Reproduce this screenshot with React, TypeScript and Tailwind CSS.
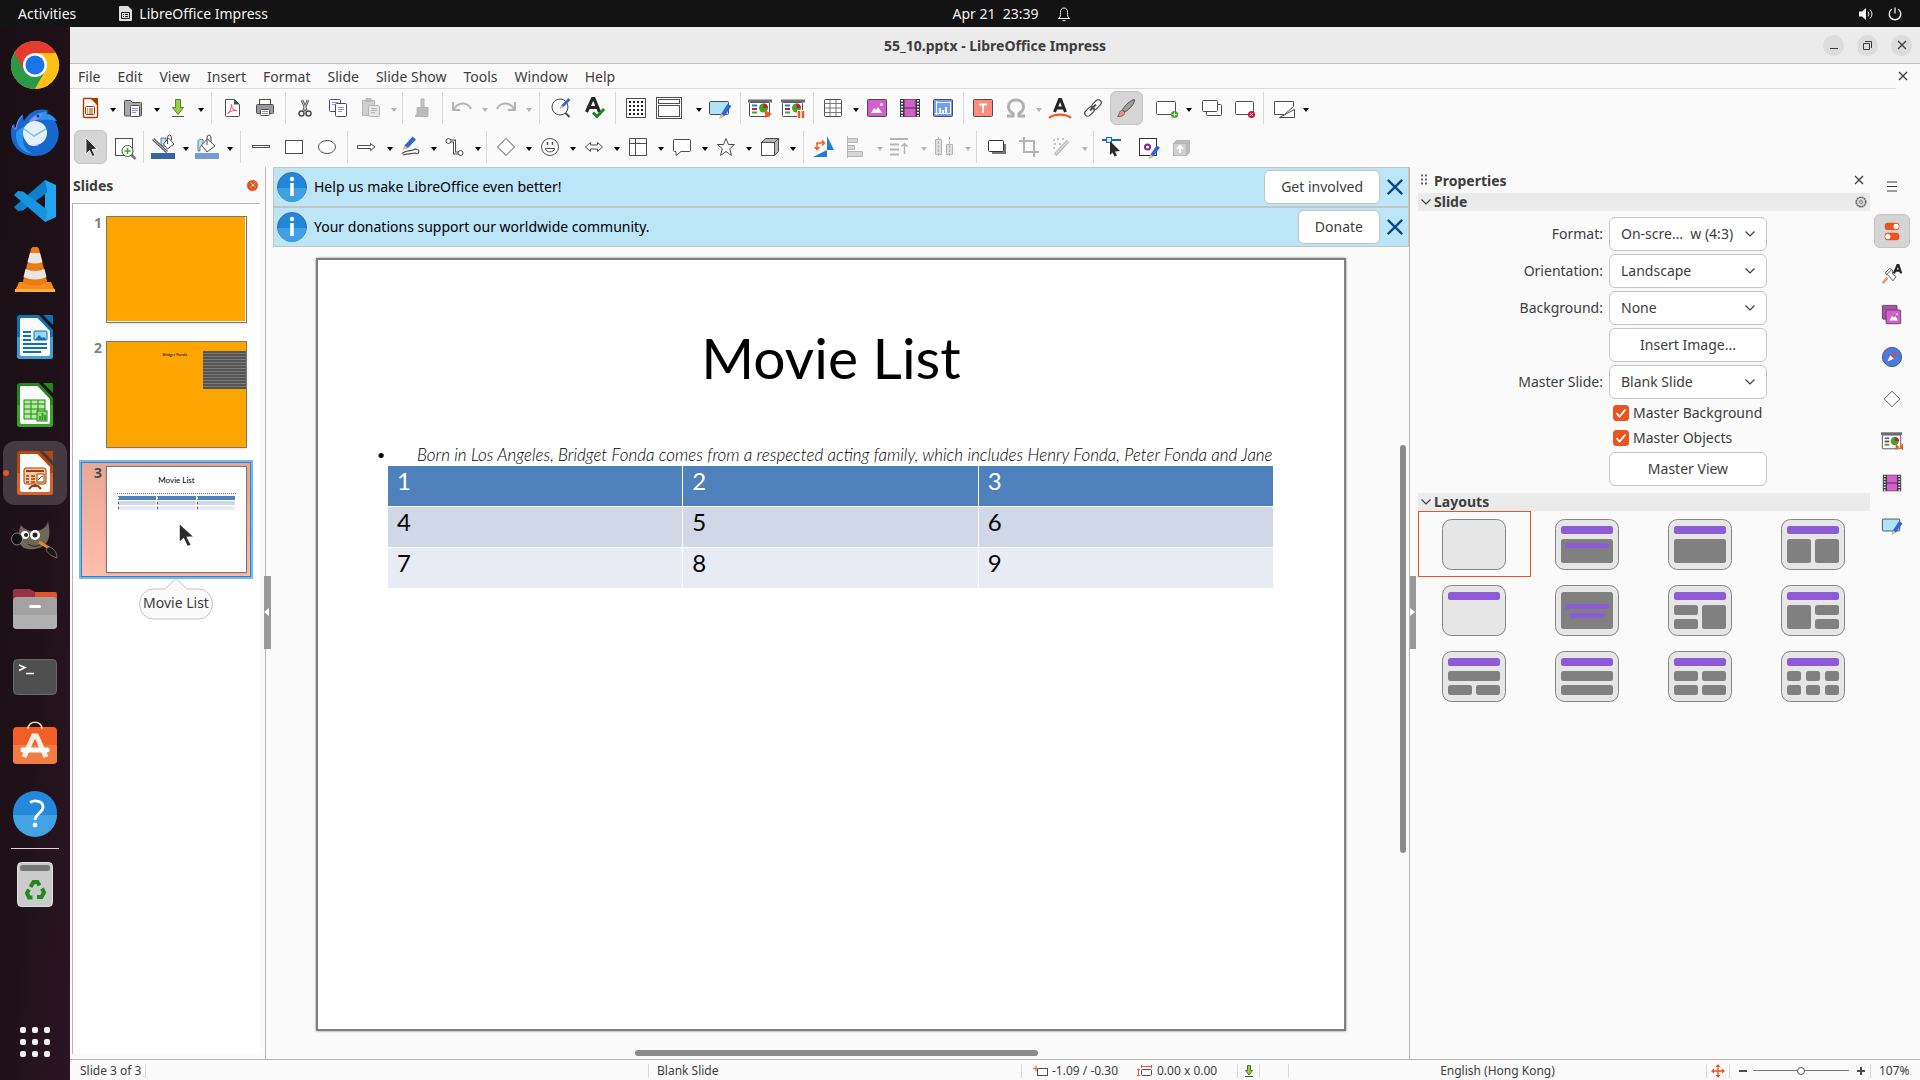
import { useState } from "react";
import type { ReactNode } from "react";

const K = "#4d4d4d";
const G = "#b5b5b5";

/* 24x24 toolbar glyphs */
const icons: Record<string, ReactNode> = {
  new: (
    <>
      <path d="M5.5 2.5h9l5 5v13a1 1 0 0 1-1 1h-12a1 1 0 0 1-1-1v-17a1 1 0 0 1 1-1z" fill="#fff" stroke="#a33e03" strokeWidth="1.4" />
      <path d="M12 2h8v8z" fill="#a33e03" />
      <rect x="7.5" y="10.5" width="9" height="8" rx="1" fill="none" stroke="#a33e03" />
      <path d="M9 13h1.2M11 13h4M9 15h1.2M11 15h4M9 17h1.2M11 17h4" stroke="#a33e03" />
    </>
  ),
  open: (
    <>
      <path d="M2.5 19V5.5a1 1 0 0 1 1-1h5l2 2h8a1 1 0 0 1 1 1V19a1 1 0 0 1-1 1h-15a1 1 0 0 1-1-1z" fill="#a9a9a9" stroke={K} />
      <rect x="8.5" y="9.5" width="9" height="11" rx="1" fill="#fff" stroke={K} />
      <path d="M10 12.5h6M10 14.5h6M10 16.5h4" stroke="#8d8df0" />
    </>
  ),
  save: (
    <>
      <path d="M9.5 3.5h5v8h3l-5.5 7-5.5-7h3z" fill="#94d13a" stroke="#5d7a35" />
      <path d="M6 20.5h12" stroke={K} />
    </>
  ),
  pdf: (
    <>
      <path d="M5.5 3.5h9l5 5v11a1 1 0 0 1-1 1h-12a1 1 0 0 1-1-1v-15a1 1 0 0 1 1-1z" fill="#fff" stroke={K} />
      <path d="M14 3.5v5h5.5z" fill={K} />
      <path d="M7.5 17.5c2.500-2 4-5 4-9 0 4 2 6 5.500 6-3.500-.5-6 .5-9.500 3z" fill="none" stroke="#ee4b72" />
    </>
  ),
  print: (
    <>
      <rect x="6.5" y="3.5" width="11" height="5" fill="#fff" stroke={K} />
      <rect x="3.5" y="8.5" width="17" height="9" rx="1" fill="#999" stroke={K} />
      <rect x="7.5" y="13.5" width="9" height="6" rx="1" fill="#fff" stroke={K} />
      <path d="M9 15.5h6M9 17.5h6" stroke="#8d8df0" />
    </>
  ),
  cut: (
    <>
      <path d="M9 4l4.5 11M15 4l-4.5 11" stroke={K} strokeWidth="2.6" />
      <path d="M9 4l4.5 11M15 4l-4.5 11" stroke="#d8d4c8" />
      <circle cx="8.5" cy="17.5" r="2.5" fill="none" stroke={K} strokeWidth="1.5" />
      <circle cx="15.5" cy="17.5" r="2.5" fill="none" stroke={K} strokeWidth="1.5" />
    </>
  ),
  copy: (
    <>
      <rect x="3.5" y="3.5" width="11" height="12" rx="1" fill="#fff" stroke={K} />
      <path d="M6 6.5h6M6 8.5h3" stroke="#8d8df0" />
      <rect x="9.5" y="7.5" width="11" height="13" rx="1" fill="#fff" stroke={K} />
      <path d="M12 11.5h6M12 13.5h6M12 15.5h4" stroke="#8d8df0" />
    </>
  ),
  paste: (
    <>
      <path d="M3.5 4.5h12v15h-12zM7 2.5h5v3H7z" fill="#cfcfcf" stroke={G} />
      <rect x="9.5" y="9.5" width="11" height="11" rx="1" fill="#e6e6e6" stroke={G} />
      <path d="M12 12.5h6M12 14.5h6M12 16.5h4" stroke={G} />
    </>
  ),
  clone: (
    <>
      <path d="M11 3h3v8h-3z" fill="#c6c6c6" stroke={G} />
      <path d="M7 11.5h11v3H7zM7 14.5h11v6H5l2-3z" fill="#bdbdbd" stroke={G} />
    </>
  ),
  undo: <path d="M3 6v8h7M3.5 13.5C8 6 17 5 21 13" fill="none" stroke={G} strokeWidth="2" />,
  redo: <path d="M21 6v8h-7M20.5 13.5C16 6 7 5 3 13" fill="none" stroke={G} strokeWidth="2" />,
  find: (
    <>
      <circle cx="12" cy="11" r="8" fill="none" stroke={K} />
      <path d="M17.5 17l4 4" stroke={K} strokeWidth="2" />
      <path d="M12 12.5l1.5-3.5 7-7 2 2-7 7z" fill="#3465d8" />
      <path d="M12 12.5l1.5-3.5 2 2z" fill="#fbbd77" />
    </>
  ),
  spell: (
    <>
      <path d="M5.5 16L11.5 2.5h1.5L18.5 16M7.5 11.5h9" fill="none" stroke="#262626" strokeWidth="3.2" />
      <path d="M12 16.5l4 4 7-7.5" fill="none" stroke="#158a22" strokeWidth="3" />
    </>
  ),
  grid: (
    <>
      <rect x="2.5" y="2.5" width="19" height="19" fill="#fff" stroke={K} />
      <path d="M5 6h14M5 10h14M5 14h14M5 18h14" stroke="#222" strokeWidth="2" strokeDasharray="2 2" />
    </>
  ),
  display: (
    <>
      <rect x="-.5" y="1.5" width="25" height="21" fill="#fff" stroke={K} />
      <rect x="1.5" y="3.5" width="21" height="4" fill="none" stroke={K} />
      <rect x="1.5" y="9.5" width="21" height="11" fill="none" stroke={K} />
    </>
  ),
  master: (
    <>
      <rect x="1.5" y="5.5" width="19" height="13" rx="1" fill="#aee3f8" stroke={K} />
      <path d="M11.5 22.5l1.5-4.5 6.5-10 4 2-7 10z" fill="#3465d8" />
      <path d="M11.5 22.5l1.5-4.5 3.2 2z" fill="#fbbd77" />
    </>
  ),
  start: (
    <>
      <rect x="1.5" y="6.5" width="20" height="14" rx="1" fill="#fff" stroke={K} />
      <path d="M0 5h24" stroke="#6b6b6b" strokeWidth="3" />
      <path d="M4 9.5h5" stroke="#1b7fd6" strokeWidth="2" />
      <path d="M4 13h5" stroke="#d0143c" strokeWidth="2" />
      <path d="M4 16.5h5" stroke="#3fa628" strokeWidth="2" />
      <circle cx="15.5" cy="12" r="4.5" fill="#3fa628" />
      <path d="M15.5 12V7.5A4.5 4.5 0 0 1 20 12z" fill="#d0143c" />
      <path d="M17 14l7 4-7 4z" fill="#f15a24" />
    </>
  ),
  startHere: (
    <>
      <rect x="1.5" y="6.5" width="20" height="14" rx="1" fill="#fff" stroke={K} />
      <path d="M0 5h24" stroke="#6b6b6b" strokeWidth="3" />
      <path d="M4 9.5h5" stroke="#1b7fd6" strokeWidth="2" />
      <path d="M4 13h5" stroke="#d0143c" strokeWidth="2" />
      <path d="M4 16.5h5" stroke="#3fa628" strokeWidth="2" />
      <circle cx="15.5" cy="12" r="4.5" fill="#3fa628" />
      <path d="M15.5 12V7.5A4.5 4.5 0 0 1 20 12z" fill="#d0143c" />
      <path d="M16 14h8v9h-8z" fill="#fafafa" />
      <path d="M18 15v7M22 15v7" stroke="#f15a24" strokeWidth="2.5" />
    </>
  ),
  table: (
    <>
      <rect x="3.5" y="3.5" width="17" height="17" rx="1" fill="#fff" stroke={K} />
      <path d="M3.5 7.5h17M3.5 12h17M3.5 16.5h17M9 3.5v17M15 3.5v17" stroke="#777" />
    </>
  ),
  image: (
    <>
      <rect x="2.5" y="3.5" width="19" height="17" rx="1" fill="#d25fcb" stroke={K} />
      <path d="M6 17l3-5 2 2 2-3 4 6z" fill="#fff" />
      <circle cx="16.5" cy="8.5" r="1.5" fill="#f5dff4" />
    </>
  ),
  video: (
    <>
      <rect x="2" y="3" width="20" height="18" fill="#3f3a3f" />
      <path d="M6.5 3.5h11v8h-11zM6.5 12.5h11v8h-11z" fill="#d25fcb" />
      <path d="M4 4v17M20 4v17" stroke="#fff" strokeWidth="2" strokeDasharray="1.5 1.5" />
    </>
  ),
  chart: (
    <>
      <rect x="2.5" y="3.5" width="19" height="17" rx="1" fill="#729fff" stroke={K} />
      <path d="M5.5 5v14M4 17.5h16M5 6.5h14.5v11" fill="none" stroke="#fff" />
      <path d="M9 17v-5M12 17v-3M15 17v-6" stroke="#fff" strokeWidth="2" />
    </>
  ),
  textbox: (
    <>
      <rect x="2.5" y="3.5" width="19" height="17" rx="1" fill="#ff8d7e" stroke={K} />
      <path d="M8 8.5h8M12 8.5V17" stroke="#fff" strokeWidth="2" />
    </>
  ),
  omega: <path d="M3 20h6v-2.5C5.5 15.5 4.5 13 4.5 10.5 4.5 6 8 4 12 4s7.5 2 7.5 6.5c0 2.5-1 5-4.5 7V20h6" fill="none" stroke="#b0b0b0" strokeWidth="3" />,
  fontwork: (
    <>
      <path d="M6.5 16L11.5 3.5h1.2L17.5 16M8.5 12h7.5" fill="none" stroke="#262626" strokeWidth="3" />
      <path d="M1 22c5-4.5 17-4.5 22 0" fill="none" stroke="#f15a24" strokeWidth="2.2" />
    </>
  ),
  link: (
    <g fill="none" stroke={K} strokeWidth="1.2">
      <rect x="10" y="5.5" width="11" height="6" rx="3" transform="rotate(-45 15.5 8.5)" />
      <rect x="3" y="12.5" width="11" height="6" rx="3" transform="rotate(-45 8.5 15.5)" />
      <path d="M9 14.5l6-6" strokeWidth="2" />
    </g>
  ),
  brush: (
    <>
      <path d="M8.5 13.5C12 8.5 16 4.5 20.5 3.5c0 4.5-4.5 9-9.5 12.5z" fill="#a0a0a0" stroke={K} />
      <path d="M3.5 20.5c2-1.5 1.5-4 3-5.5 2-1.5 4.5 0 4 2.5-.6 2.5-4.5 3.5-7 3z" fill="#ff8d7e" stroke={K} strokeWidth=".8" />
    </>
  ),
  newSlide: (
    <>
      <rect x="2.5" y="5.5" width="19" height="13" rx="1" fill="#fff" stroke={K} />
      <circle cx="20.5" cy="18.5" r="3.5" fill="#3fa628" />
      <path d="M18.5 18.5h4M20.5 16.5v4" stroke="#fff" />
    </>
  ),
  dupSlide: (
    <>
      <rect x="8.5" y="8.5" width="15" height="11" rx="1" fill="#fff" stroke={K} />
      <rect x="4.5" y="4.5" width="15" height="11" rx="1" fill="#fff" stroke={K} />
    </>
  ),
  delSlide: (
    <>
      <rect x="4.5" y="5.5" width="18" height="13" rx="1" fill="#fff" stroke={K} />
      <circle cx="20.5" cy="18.5" r="3.5" fill="#d0143c" />
      <path d="M19 17l3 3M22 17l-3 3" stroke="#fff" />
    </>
  ),
  layout: (
    <>
      <path d="M3.5 5.5h19v5l-9 8h-10z" fill="#fff" stroke={K} />
      <path d="M8.5 21.5l15-8v8z" fill="#fff" stroke={K} />
    </>
  ),
  select: <path d="M8 3l11 11-5 .5 3 6-2.5 1-3-6-3.5 3.5z" fill="#2b2b2b" stroke="#fff" strokeWidth=".8" />,
  zoom: (
    <>
      <rect x="4.5" y="3.5" width="17" height="17" fill="#fff" stroke={K} />
      <circle cx="16.5" cy="16" r="5.5" fill="#fff" stroke={K} />
      <path d="M20.5 20l4 4" stroke="#777" strokeWidth="2.5" />
      <path d="M13.5 16h6M16.5 13v6" stroke="#3fa628" strokeWidth="1.5" />
    </>
  ),
  lineColor: (
    <>
      <path d="M10 3h5v8h-5z" fill="#aee3f8" stroke={K} strokeWidth=".7" />
      <path d="M2 4l14 13" stroke={K} strokeWidth="3" />
      <path d="M2 4l14 13" stroke="#ddd" />
      <path d="M17.5 3l5.5 6-6.5 5-4-5z" fill="#fff" stroke={K} />
      <path d="M16.5 9V3q0-3 2-3t2 3v2" fill="none" stroke={K} />
      <path d="M0 18h24v6H0z" fill="#3465a4" />
    </>
  ),
  fillColor: (
    <>
      <path d="M3 16V6q0-2 5-1.5V10l-3 2v4z" fill="#aee3f8" stroke={K} strokeWidth=".7" />
      <path d="M12.5 4l7.5 7-8 6-5.5-7z" fill="#fff" stroke={K} />
      <path d="M12 10V3q0-3 2-3t2 3v4" fill="none" stroke={K} />
      <path d="M0 18h24v6H0z" fill="#729fcf" />
    </>
  ),
  line: <rect x="3.5" y="10.5" width="17" height="2" fill="#fff" stroke={K} />,
  rect: <rect x="3.5" y="5.5" width="17" height="13" fill="#fff" stroke={K} />,
  ellipse: <ellipse cx="12" cy="12" rx="8.5" ry="6.5" fill="#fff" stroke={K} />,
  arrow: <path d="M2.5 10.5h13v-2l4.5 3.5-4.5 3.5v-2h-13z" fill="#fff" stroke={K} />,
  curve: (
    <>
      <path d="M3 18.5c5-4 9-2 11-3.5s6-1 6 1.5-4 3-4 1M4 20c5-2 9-1 12-2" fill="none" stroke={K} strokeWidth="1.2" />
      <path d="M4 14.5l1.5-4 8-9 3.5 3-8 8.5z" fill="#3465d8" />
      <path d="M4 14.5l1.5-4 3.5 2.5z" fill="#fbbd77" />
    </>
  ),
  connector: (
    <>
      <path d="M6 6h5.5v12H17" fill="none" stroke={K} strokeWidth="3" />
      <path d="M6 6h5.5v12H17" fill="none" stroke="#fff" />
      <circle cx="5.5" cy="6" r="2.5" fill="#fff" stroke={K} />
      <circle cx="17.5" cy="18" r="2.5" fill="#fff" stroke={K} />
    </>
  ),
  diamond: <path d="M12 3.5l8.5 8.5-8.5 8.5L3.5 12z" fill="#fff" stroke={K} />,
  smiley: (
    <>
      <circle cx="12" cy="12" r="8.5" fill="#fff" stroke={K} />
      <path d="M9.5 7v3M14.5 7v3" stroke={K} strokeWidth="1.5" />
      <path d="M7.5 13.5h9c0 4.5-9 4.5-9 0z" fill="#fff" stroke={K} />
    </>
  ),
  dblArrow: <path d="M3.5 12l5-4.5v2.5h7V7.5l5 4.5-5 4.5V14h-7v2.5z" fill="#fff" stroke={K} />,
  flow: <path d="M3.5 3.5h17v17h-17zM3.5 8.5h17M9.5 3.5v17" fill="#fff" stroke={K} />,
  callout: <path d="M4.5 4.5h15a1 1 0 0 1 1 1v10a1 1 0 0 1-1 1H11l-5 4v-4H4.5a1 1 0 0 1-1-1v-10a1 1 0 0 1 1-1z" fill="#fff" stroke={K} />,
  star: <path d="M12 3.5l2.4 6h6.1l-4.8 4.3 1.8 6.7L12 16.5l-5.5 4 1.8-6.7-4.8-4.3h6.1z" fill="#fff" stroke={K} />,
  cube: (
    <>
      <path d="M3.5 7.5l4-4h13l-4 4zM16.5 7.5l4-4v13l-4 4z" fill="#b5b5b5" stroke={K} />
      <rect x="3.5" y="7.5" width="13" height="13" fill="#fff" stroke={K} />
    </>
  ),
  rotate: (
    <>
      <path d="M15 1l7 14h-7z" fill="#1b7fd6" />
      <path d="M1 22l14-7v7z" fill="#1b7fd6" />
      <path d="M5 14V8h7M10 5.5L12.5 8 10 10.5M2.5 12L5 14.5 7.5 12" fill="none" stroke="#f15a24" strokeWidth="1.5" />
    </>
  ),
  align: (
    <>
      <path d="M2.5 1v22" stroke={G} />
      <path d="M2.5 3.5h10v4h-10zM2.5 10.5h7v4h-7zM2.5 16.5h15v5h-15z" fill="#d6d6d6" stroke={G} />
    </>
  ),
  arrange: (
    <>
      <path d="M1 4h18M1 9.5h9M1 14.5h9M1 19.5h9" stroke={G} strokeWidth="2" />
      <path d="M15.5 19V9M12.5 11.5l3-3 3 3" fill="none" stroke={G} strokeWidth="1.5" />
    </>
  ),
  distribute: (
    <>
      <path d="M2.5 4.5h6v15h-6zM13.5 9.5h6v10h-6z" fill="#dedede" stroke={G} />
      <path d="M5.5 2v20M16.5 2v20" stroke={G} strokeDasharray="3 1" />
    </>
  ),
  shadow: (
    <>
      <path d="M8 9h14v10H8z" fill="#777" />
      <rect x="4.5" y="5.5" width="15" height="11" rx="1" fill="#fff" stroke="#333" />
    </>
  ),
  crop: <path d="M2 6h15v16M7 2v15h15" fill="none" stroke={G} strokeWidth="2" />,
  filter: (
    <>
      <path d="M5 20L18 6" stroke={G} strokeWidth="3.5" />
      <path d="M5 20L18 6" stroke="#ddd" strokeWidth="1.5" />
      <path d="M3 5h2M7 4h2M12 4h2M4 9h2M9 9h2M3 13h2" stroke={G} strokeWidth="1.5" />
    </>
  ),
  points: (
    <>
      <path d="M1 5h19" stroke="#1b6bab" strokeWidth="2" />
      <rect x="5.5" y="2.5" width="5" height="5" fill="#cdeefb" stroke="#1b6bab" />
      <path d="M9 6l10 10-5 .5 2 4-2.5 1-2-4L9 20z" fill="#2b2b2b" />
    </>
  ),
  glue: (
    <>
      <rect x="5.5" y="3.5" width="17" height="17" fill="#fff" stroke="#333" />
      <circle cx="13.5" cy="12" r="2.5" fill="#fff" stroke="#7b2a86" strokeWidth="2" />
      <path d="M15 23.5l1.5-4 6-9 3.5 2-6.5 9z" fill="#3465d8" />
      <path d="M15 23.5l1.5-4 3 2z" fill="#fbbd77" />
    </>
  ),
  extrude: (
    <>
      <path d="M6.5 8.5l3-3h13v12l-3 3z" fill="#bdbdbd" stroke={G} />
      <rect x="6.5" y="8.5" width="13" height="12" fill="#d0d0d0" stroke={G} />
      <path d="M13 18v-7M10 14l3-3 3 3" fill="none" stroke="#fff" strokeWidth="2" />
    </>
  ),
  properties: (
    <>
      <rect x="4" y="3" width="16" height="8" rx="3.5" fill="#e95420" />
      <rect x="4" y="14" width="16" height="8" rx="3.5" fill="#e95420" />
      <circle cx="16.5" cy="7" r="2.8" fill="#fff" />
      <circle cx="7.5" cy="18" r="2.8" fill="#fff" />
    </>
  ),
  styles: (
    <>
      <path d="M14 12.5L18 3.5h1L22 12.5M15.5 9.5h6" fill="none" stroke="#222" strokeWidth="2.4" />
      <path d="M2 23l5-6" stroke="#ff8d7e" strokeWidth="3" />
      <path d="M4.5 12l5-5 3 2v4l4 3-3.5 4.5-4-5z" fill="#fff" stroke={K} />
      <path d="M6 14l5-5" stroke={K} />
    </>
  ),
  gallery: (
    <>
      <rect x="1.5" y="1.5" width="16" height="15" rx="1" fill="#b44ab0" stroke={K} />
      <rect x="5.5" y="6.5" width="16" height="15" rx="1" fill="#d25fcb" stroke={K} />
      <path d="M9 18l3-5 2 2 1.5-2 3 5z" fill="#fff" />
      <circle cx="17.5" cy="11" r="1" fill="#fff" />
    </>
  ),
  navigator: (
    <>
      <circle cx="12" cy="12" r="10.5" fill="#4a7be0" stroke={K} />
      <path d="M10 10l7-4-3 8z" fill="#e0405a" />
      <path d="M10 10l4 4-7 3z" fill="#fff" />
    </>
  ),
  transition: (
    <>
      <rect x="1.5" y="5.5" width="20" height="15" rx="1" fill="#fff" stroke={K} />
      <path d="M0 4h23" stroke="#6b6b6b" strokeWidth="3" />
      <path d="M4 9h5" stroke="#1b7fd6" strokeWidth="2" />
      <path d="M4 12.5h5" stroke="#d0143c" strokeWidth="2" />
      <path d="M4 16h5" stroke="#3fa628" strokeWidth="2" />
      <circle cx="15" cy="12" r="4.5" fill="#3fa628" />
      <path d="M15 12V7.5a4.5 4.5 0 0 1 4.5 4.5z" fill="#d0143c" />
      <path d="M16 15l4 3.5-4 3.5zM24 15l-4 3.5 4 3.5z" fill="#f15a24" />
    </>
  ),
};

function Icon({ name }: { name: string }) {
  return (
    <svg viewBox="0 0 24 24" className="size-6 shrink-0 overflow-visible" aria-hidden="true">
      {icons[name]}
    </svg>
  );
}

type Tool = { id: string; menu?: boolean; off?: boolean; active?: boolean; wide?: boolean } | "sep" | "wsep" | "gap";

const standardBar: Tool[] = [
  { id: "new", menu: true }, { id: "open", menu: true }, { id: "save", menu: true }, "wsep",
  { id: "pdf" }, { id: "print" }, "sep",
  { id: "cut" }, { id: "copy" }, { id: "paste", menu: true, off: true }, "sep",
  { id: "clone" }, "sep",
  { id: "undo", menu: true, off: true }, { id: "redo", menu: true, off: true }, "wsep",
  { id: "find" }, { id: "spell" }, "wsep",
  { id: "grid" }, { id: "display", menu: true, wide: true }, { id: "master" }, "sep",
  { id: "start" }, { id: "startHere" }, "sep",
  { id: "table", menu: true }, { id: "image" }, { id: "video" }, { id: "chart" }, "sep",
  { id: "textbox" }, { id: "omega", menu: true, off: true }, { id: "fontwork" }, { id: "link" }, { id: "brush", active: true }, "gap",
  { id: "newSlide", menu: true }, { id: "dupSlide" }, { id: "delSlide" }, "sep",
  { id: "layout", menu: true },
];

const drawingBar: Tool[] = [
  { id: "select", active: true }, { id: "zoom" }, "sep",
  { id: "lineColor", menu: true }, { id: "fillColor", menu: true }, "wsep",
  { id: "line" }, { id: "rect" }, { id: "ellipse" }, "sep",
  { id: "arrow", menu: true }, { id: "curve", menu: true }, { id: "connector", menu: true }, "sep",
  { id: "diamond", menu: true }, { id: "smiley", menu: true }, { id: "dblArrow", menu: true }, { id: "flow", menu: true },
  { id: "callout", menu: true }, { id: "star", menu: true }, { id: "cube", menu: true }, "wsep",
  { id: "rotate" }, { id: "align", menu: true, off: true }, { id: "arrange", menu: true, off: true }, { id: "distribute", menu: true, off: true }, "sep",
  { id: "shadow" }, { id: "crop" }, { id: "filter", menu: true, off: true }, "sep",
  { id: "points" }, { id: "glue" }, { id: "extrude" },
];

function ToolBar({ tools, label }: { tools: Tool[]; label: string }) {
  return (
    <div role="toolbar" aria-label={label} className="flex h-[39px] items-center px-1 pb-0.5">
      {tools.map((t, i) => {
        if (t === "gap") return <span key={i} className="w-[7px]" />;
        if (t === "sep" || t === "wsep")
          return (
            <span key={i} className={t === "sep" ? "flex w-[7px] justify-center" : "flex w-[10px] justify-center"}>
              <span className="h-8 w-px bg-[#d9d9d9]" />
            </span>
          );
        return (
          <span key={i} className="flex shrink-0 items-center">
            <button
              aria-label={t.id}
              className={`flex h-[34px] items-center rounded-md border pl-[3px] ${t.wide ? "w-10" : "w-[33px]"} ${t.active ? "border-[#c4c4c4] bg-[#d5d5d5]" : "border-transparent"}`}
            >
              <Icon name={t.id} />
            </button>
            {t.menu && (
              <button aria-label={`${t.id} options`} className="flex w-[11px] justify-center pt-1">
                <svg viewBox="0 0 6 4" className="h-1 w-1.5">
                  <path d="M0 0h6L3 4z" fill={t.off ? G : "#000"} />
                </svg>
              </button>
            )}
          </span>
        );
      })}
    </div>
  );
}

/* 48x48 launcher icons */
function OfficeDoc({ dark, light, children }: { dark: string; light: string; children: ReactNode }) {
  return (
    <>
      <path d="M10 2h18l14 15v26a3 3 0 0 1-3 3H9a3 3 0 0 1-3-3V5a3 3 0 0 1 3-3z" fill={dark} />
      <path d="M6 24h36v19a3 3 0 0 1-3 3H9a3 3 0 0 1-3-3z" fill={light} />
      <path d="M10 5h16.5L39 18v23a2 2 0 0 1-2 2H11a2 2 0 0 1-2-2V6z" fill="#fbfbfb" />
      <path d="M32 2h9a1 1 0 0 1 1 1v9z" fill={dark} />
      {children}
    </>
  );
}

const dock: { name: string; art: ReactNode; active?: boolean }[] = [
  {
    name: "Google Chrome",
    art: (
      <>
        <circle cx="24" cy="24" r="24" fill="#fbc116" />
        <path d="M24 24L3.2 12A24 24 0 0 0 24 48l10.4-18z" fill="#2b9846" />
        <path d="M24 12h20.8A24 24 0 0 1 24 48l10.4-18z" fill="#fbc116" />
        <path d="M24 24L3.2 12A24 24 0 0 1 44.8 12H24z" fill="#e33b2e" />
        <path d="M3.2 12L13.6 30 24 24z" fill="#e33b2e" />
        <circle cx="24" cy="24" r="12" fill="#fff" />
        <circle cx="24" cy="24" r="9.5" fill="#1a73e8" />
      </>
    ),
  },
  {
    name: "Thunderbird",
    art: (
      <>
        <path d="M24 47C10 47 0 37 0 24c0-6 2-9 3-9 1 2 1 3 2 4 0-6 3-11 7-14 0 3 0 5 1 7C18 3 27-2 38 2c-2 0-3 1-3 2 5 1 9 4 11 8l-2 0c6 10 4 20-1 26-5 6-11 9-19 9z" fill="#1668cc" />
        <path d="M18 12c5-8 14-10 20-9-2 0-3 1-3 2 5 1 9 4 10 7-9-2-19-1-27 0z" fill="#2f92ef" />
        <path d="M5 24C4 36 12 44 22 45c-6-3-10-8-10-15 0-6 3-10 7-13-6 0-12 3-14 7z" fill="#2f92ef" />
        <path d="M1 17c2 2 3 4 4 3 1-6 3-10 6-13" fill="none" stroke="#9d8bee" />
        <path d="M18 13c3-5 9-8 14-8-3 3-6 8-14 8z" fill="#9d8bee" />
        <ellipse cx="24" cy="24" rx="12" ry="12" fill="#e3f1fc" />
        <path d="M13 20l10 7 12-7" fill="none" stroke="#8fbbe8" strokeWidth="1.5" />
        <path d="M14 31c4 4 9 5 14 6-5 0-9 0-11-2z" fill="#fff" />
        <circle cx="27" cy="7" r="1.5" fill="#0e3c80" />
      </>
    ),
  },
  {
    name: "Visual Studio Code",
    art: (
      <>
        <path d="M34 3l11 5v32l-11 5z" fill="#24a5f0" />
        <path d="M34 3L3 30l4 4 5-.5 24-18V12z" fill="#0e7fcb" />
        <path d="M34 45L3 18l4-4 5 .5 24 18V36z" fill="#1893dd" />
      </>
    ),
  },
  {
    name: "VLC",
    art: (
      <>
        <path d="M8 37h32l4 9H4z" fill="#f78b1e" />
        <path d="M4 44h40v3H4z" fill="#f9ad3a" />
        <path d="M22 2h4c1 0 1.5 1 2 2l8 32c0 6-24 6-24 0l8-32c.5-1 1-2 2-2z" fill="#ee7a12" />
        <path d="M19 8h10l2.5 9q-7.5 3-15 0zM14.5 24q9.5 4 19 0l2 8q-11.5 5-23 0z" fill="#e6e6e6" />
      </>
    ),
  },
  {
    name: "LibreOffice Writer",
    art: (
      <OfficeDoc dark="#0e72b5" light="#3e9fd6">
        <path d="M12 19h8M12 23h8M12 27h8M12 31h24M12 35h24M12 39h18" stroke="#0e72b5" strokeWidth="2" />
        <rect x="23" y="18" width="13" height="9" rx="1" fill="#9bd4f5" stroke="#0e72b5" />
        <path d="M24 27l4-5 3 3 2-1 3 3z" fill="#0e72b5" />
      </OfficeDoc>
    ),
  },
  {
    name: "LibreOffice Calc",
    art: (
      <OfficeDoc dark="#238815" light="#35a425">
        <rect x="13" y="19" width="21" height="19" fill="#b4eaa2" stroke="#238815" />
        <path d="M13 23h21M13 28h21M13 33h21M20 19v19M27 19v19" stroke="#238815" />
        <rect x="26" y="30" width="10" height="10" fill="#8fdc76" stroke="#238815" />
        <path d="M29 39v-4M31.5 39v-7M34 39v-5" stroke="#238815" strokeWidth="1.5" />
      </OfficeDoc>
    ),
  },
  {
    name: "LibreOffice Impress",
    active: true,
    art: (
      <OfficeDoc dark="#b8460f" light="#d9622b">
        <rect x="13" y="19" width="22" height="16" rx="2" fill="#f7c9a8" stroke="#a33e03" />
        <path d="M15 22h18" stroke="#a33e03" strokeWidth="2" />
        <path d="M15 27h3M15 30h3M15 33h3M20 27h4M20 30h4M20 33h4" stroke="#a33e03" strokeWidth="1.5" />
        <rect x="26" y="25" width="7" height="8" fill="#fff" stroke="#a33e03" />
        <path d="M27 31l3-3 2-1" stroke="#a33e03" fill="none" />
        <path d="M24 35v2M18 40l3-3h6l3 3" fill="none" stroke="#a33e03" strokeWidth="2" />
      </OfficeDoc>
    ),
  },
  {
    name: "GIMP",
    art: (
      <>
        <path d="M10 8c3 4 7 6 13 6 8 0 13-4 14-10 2 9 2 17-1 21-4 6-12 8-19 7-8-1-9-7-9-12 0-4 0-8 2-12z" fill="#6e665a" />
        <circle cx="14" cy="18" r="4" fill="#fff" />
        <circle cx="24" cy="18" r="5" fill="#fff" />
        <circle cx="15" cy="18" r="2" fill="#222" />
        <circle cx="24" cy="18" r="2.5" fill="#222" />
        <ellipse cx="6" cy="22" rx="5.5" ry="6" fill="#111" stroke="#aaa" strokeWidth=".7" />
        <path d="M17 27c5 3 9 3 13 0" fill="none" stroke="#222" />
        <path d="M28 25l10 6" stroke="#e98b2a" strokeWidth="3" />
        <path d="M37 30c5 0 9 5 9 11-4-1-9-4-11-8z" fill="#1a1a1a" stroke="#999" strokeWidth=".6" />
      </>
    ),
  },
  {
    name: "Files",
    art: (
      <>
        <path d="M2 16V6a2 2 0 0 1 2-2h15l5 3h20a2 2 0 0 1 2 2v8z" fill="#9a3045" />
        <path d="M24 7h20a2 2 0 0 1 2 2v8H24z" fill="#e0542b" />
        <rect x="2" y="12" width="44" height="32" rx="4" fill="#a2a2a2" />
        <path d="M2 30h44v10a4 4 0 0 1-4 4H6a4 4 0 0 1-4-4z" fill="#b0b0b0" />
        <rect x="18" y="20" width="12" height="3" rx="1.5" fill="#fff" />
      </>
    ),
  },
  {
    name: "Terminal",
    art: (
      <>
        <rect x="2.5" y="6.5" width="43" height="35" rx="4" fill="#4f4f4f" stroke="#686868" />
        <path d="M8 12l6 2.5-6 3M15 20.5h8" fill="none" stroke="#fff" strokeWidth="1.5" />
      </>
    ),
  },
  {
    name: "Ubuntu Software",
    art: (
      <>
        <rect x="2" y="6" width="44" height="37" rx="4" fill="#f15f26" />
        <path d="M2 24h44v15a4 4 0 0 1-4 4H6a4 4 0 0 1-4-4z" fill="#f27d43" />
        <path d="M17 8c0-9 14-9 14 0" fill="none" stroke="#f5d8a0" strokeWidth="1.6" />
        <path d="M13 36l9.5-21h3L35 36" fill="none" stroke="#fdeee6" strokeWidth="5" />
        <path d="M12 29h24" stroke="#fff" strokeWidth="5" strokeLinecap="round" />
      </>
    ),
  },
  {
    name: "Help",
    art: (
      <>
        <circle cx="24" cy="24" r="22" fill="#2489db" />
        <path d="M2 26a22 22 0 0 0 44 0z" fill="#42a2e4" />
        <path d="M19 13.5c5-3 13-1.5 13 4.5 0 6-7.5 6-8 13" fill="none" stroke="#fff" strokeWidth="2.8" />
        <circle cx="24" cy="36" r="2.4" fill="#fff" />
      </>
    ),
  },
];

const layouts: [number, number, number, number, boolean?][][] = [
  [],
  [[6, 20, 52, 24], [6, 7, 52, 8, true], [10, 24, 44, 5, true]],
  [[6, 7, 52, 8, true], [6, 20, 52, 24]],
  [[6, 7, 52, 8, true], [6, 20, 24, 24], [34, 20, 24, 24]],
  [[6, 7, 52, 8, true]],
  [[6, 7, 52, 37], [10, 19, 44, 5, true], [14, 28, 36, 5, true]],
  [[6, 7, 52, 8, true], [6, 20, 24, 10], [6, 34, 24, 10], [34, 20, 24, 24]],
  [[6, 7, 52, 8, true], [6, 20, 24, 24], [34, 20, 24, 10], [34, 34, 24, 10]],
  [[6, 7, 52, 8, true], [6, 20, 52, 10], [6, 34, 24, 10], [34, 34, 24, 10]],
  [[6, 7, 52, 8, true], [6, 20, 52, 10], [6, 34, 52, 10]],
  [[6, 7, 52, 8, true], [6, 20, 24, 10], [34, 20, 24, 10], [6, 34, 24, 10], [34, 34, 24, 10]],
  [[6, 7, 52, 8, true], [6, 20, 14, 10], [25, 20, 14, 10], [44, 20, 14, 10], [6, 34, 14, 10], [25, 34, 14, 10], [44, 34, 14, 10]],
];

const menus = ["File", "Edit", "View", "Insert", "Format", "Slide", "Slide Show", "Tools", "Window", "Help"];
const rows = [["1", "2", "3"], ["4", "5", "6"], ["7", "8", "9"]];
const decks = ["properties", "styles", "gallery", "navigator", "diamond", "transition", "video", "master"];
const bodyText =
  "Born in Los Angeles, Bridget Fonda comes from a respected acting family, which includes Henry Fonda, Peter Fonda and Jane";

function Cross({ className }: { className: string }) {
  return (
    <svg viewBox="0 0 10 10" className={className} aria-hidden="true">
      <path d="M1 1l8 8M9 1L1 9" stroke="currentColor" strokeWidth="1.3" fill="none" />
    </svg>
  );
}

function InfoBar({ text, action }: { text: string; action: string }) {
  return (
    <div className="flex h-10 items-center border border-[#c4c4c4] bg-[#bde5f8] pr-px pl-[3px] text-black">
      <svg viewBox="0 0 30 30" className="size-[30px]" aria-hidden="true">
        <circle cx="15" cy="15" r="14.5" fill="#2087db" stroke="#3c6c8f" />
        <path d="M1 16a14 14 0 0 0 28 0z" fill="#3fa0e3" />
        <path d="M15 11v13" stroke="#fff" strokeWidth="3.6" />
        <circle cx="15" cy="7" r="2.2" fill="#fff" />
      </svg>
      <p className="ml-[7px] flex-1 pb-0.5">{text}</p>
      <button className="h-[34px] rounded-md border border-[#c4c4c4] bg-white px-4 pb-0.5 text-[#3d3d3d]">{action}</button>
      <button aria-label="Close" className="ml-[3px] flex size-6 items-center justify-center text-[#0a4a8c]">
        <Cross className="size-[18px]" />
      </button>
    </div>
  );
}

function Field({ label, value }: { label: string; value: string }) {
  const id = label.toLowerCase().replace(" ", "-");
  return (
    <div className="flex items-center">
      <label htmlFor={id} className="w-[185px] pb-0.5 text-right">{label}:</label>
      <div className="relative ml-1.5 w-[158px]">
        <select id={id} className="h-[34px] w-full appearance-none rounded-md border border-[#c4c4c4] bg-white pr-7 pb-0.5 pl-[11px]">
          <option>{value}</option>
        </select>
        <svg viewBox="0 0 10 6" className="pointer-events-none absolute top-[14px] right-3 h-1.5 w-2.5">
          <path d="M.5.5L5 5 9.5.5" fill="none" stroke="#3d3d3d" strokeWidth="1.2" />
        </svg>
      </div>
    </div>
  );
}

function Check({ label }: { label: string }) {
  const [on, setOn] = useState(true);
  return (
    <label className="ml-[195px] flex h-[25px] items-center gap-1">
      <span className="relative size-4">
        <input type="checkbox" checked={on} onChange={() => setOn(!on)} className="block size-4 appearance-none rounded-[3px] border border-[#e95420] checked:bg-[#e95420]" />
        {on && (
          <svg viewBox="0 0 16 16" className="pointer-events-none absolute inset-0 size-4">
            <path d="M3.5 8l3 3.5 6-7" fill="none" stroke="#fff" strokeWidth="1.8" />
          </svg>
        )}
      </span>
      {label}
    </label>
  );
}

function SectionBar({ title, gear }: { title: string; gear?: boolean }) {
  return (
    <h2 className="flex h-[18px] items-center bg-[#ebebeb] pr-[3px] pl-[3px] font-bold">
      <svg viewBox="0 0 10 6" className="h-1.5 w-2.5">
        <path d="M.5.5L5 5 9.5.5" fill="none" stroke="#3d3d3d" strokeWidth="1.2" />
      </svg>
      <span className="ml-[3px] flex-1 leading-[18px]">{title}</span>
      {gear && (
        <button aria-label="More options">
          <svg viewBox="0 0 12 12" className="size-3">
            <circle cx="6" cy="6" r="4.8" fill="#d6d6d6" stroke="#666" strokeWidth="1.6" strokeDasharray="2 .5" />
            <circle cx="6" cy="6" r="1.5" fill="#ebebeb" stroke="#666" strokeWidth=".8" />
          </svg>
        </button>
      )}
    </h2>
  );
}

function Pointer({ className }: { className: string }) {
  return (
    <svg viewBox="0 0 18 26" className={className} aria-hidden="true">
      <path d="M1 1v20l4.5-4 4 8 4-2-4-7.5 7-.5z" fill="#2b2b2b" stroke="#fff" strokeWidth="1.5" />
    </svg>
  );
}

function SlidesPanel() {
  return (
    <section className="flex w-[194px] shrink-0 flex-col">
      <header className="flex h-9 items-center justify-between pr-1.5 pl-[3px]">
        <h2 className="font-bold">Slides</h2>
        <button aria-label="Close panel" className="flex size-[11px] items-center justify-center rounded-full bg-[#e95420] text-white">
          <Cross className="size-1.5" />
        </button>
      </header>
      <ol className="mr-1 mb-[5px] ml-0.5 flex-1 border-t border-l border-[#b5b5b5] bg-white pt-1.5 pl-1.5">
        <li className="flex h-[125px] w-[174px] items-start border-[3px] border-transparent pt-[3px]">
          <b className="w-6 pr-1 text-right leading-[14px] text-[#808080]">1</b>
          <div className="h-[107px] w-[141px] border border-[#777] bg-white pr-px pb-px shadow-sm">
            <div className="h-full bg-[#ffa500]" />
          </div>
        </li>
        <li className="flex h-[125px] w-[174px] items-start border-[3px] border-transparent pt-[3px]">
          <b className="w-6 pr-1 text-right leading-[14px] text-[#808080]">2</b>
          <div className="flex h-[107px] w-[141px] items-start justify-end border border-[#777] bg-[#ffa500] pt-[9px] shadow-sm">
            <span className="mr-4 font-['Lato',sans-serif] text-[4px] leading-[8px] text-black">Bridget Fonda</span>
            <svg viewBox="0 0 43 38" className="h-[38px] w-[43px]">
              <path d="M0 0h43v38H0z" fill="#555" />
              <path d="M0 2.5h43M0 5.5h43M0 8.5h43M0 11.5h43M0 14.5h43M0 17.5h43M0 20.5h43M0 23.5h43M0 26.5h43M0 29.5h43M0 32.5h43M0 35.5h43" stroke="#7a7a7a" />
            </svg>
          </div>
        </li>
        <li className="relative flex h-[119px] w-[174px] items-start border-2 border-[#7db7ea] bg-linear-to-b from-[#e9a795] to-[#ffbfae] pt-1 outline -outline-offset-3 outline-[#2087c8]">
          <b className="w-[25px] pr-1 text-right leading-[14px] text-[#4a4a4a]">3</b>
          <div className="h-[107px] w-[141px] border border-[#777] bg-white px-[10px] pt-2 shadow-sm">
            <p className="text-center font-['Lato',sans-serif] text-[8px] leading-[10px] text-black">Movie List</p>
            <div className="mt-2 h-px border-t border-dotted border-[#777]" />
            <table className="mt-px w-full border-collapse">
              <tbody>
                {rows.map((r, i) => (
                  <tr key={i}>
                    {r.map((c) => (
                      <td key={c} className={`h-[5px] border border-white p-0 ${i === 0 ? "bg-[#4f81bd]" : i === 1 ? "bg-[#d0d7e7]" : "bg-[#e9ebf4]"}`}>
                        <span className={`block h-0.5 w-px ${i === 0 ? "bg-white" : "bg-[#555]"}`} />
                      </td>
                    ))}
                  </tr>
                ))}
              </tbody>
            </table>
          </div>
          <Pointer className="absolute top-[60px] left-[97px] h-[26px] w-[18px]" />
          <div role="tooltip" className="absolute top-[116px] left-[58px] z-10">
            <svg viewBox="0 0 74 42" className="h-[42px] w-[74px] overflow-visible">
              <path d="M14 11H26L37 .5 48 11H60a13.5 15 0 0 1 0 30H14a13.5 15 0 0 1 0-30z" fill="#fafafa" stroke="#c4c4c4" />
            </svg>
            <span className="absolute inset-x-0 top-[10px] text-center leading-[30px] whitespace-nowrap">Movie List</span>
          </div>
        </li>
      </ol>
    </section>
  );
}

function Editor() {
  return (
    <main className="flex min-w-0 flex-1 flex-col">
      <InfoBar text="Help us make LibreOffice even better!" action="Get involved" />
      <InfoBar text="Your donations support our worldwide community." action="Donate" />
      <div className="flex min-h-0 flex-1">
        <div className="min-w-0 flex-1 pt-[11px] pr-[53px] pl-[43px]">
          <article className="aspect-[1030/773] w-full border-2 border-[#7f7f7f] bg-white font-['Lato','Noto_Sans',sans-serif] text-black shadow-[0_0_2px_#777]">
            <h1 className="pt-[63px] text-center text-[57px] leading-[68px]">Movie List</h1>
            <div className="mt-[53px] flex h-[21px] items-end pl-[59px] leading-[20px]">
              <span className="w-10 text-[14px]">•</span>
              <p className="text-[17px] font-light whitespace-nowrap italic">{bodyText}</p>
            </div>
            <table className="ml-[69px] w-[887px] table-fixed border-collapse text-left text-[24px] leading-[28px]">
              <tbody>
                {rows.map((r, i) => (
                  <tr key={i} className={i === 0 ? "bg-[#4f81bd] text-white" : i === 1 ? "bg-[#d0d7e7]" : "bg-[#e9ebf4]"}>
                    {r.map((c) => (
                      <td key={c} className="h-[41px] border border-white px-[9px] pt-px pb-2 align-top">{c}</td>
                    ))}
                  </tr>
                ))}
              </tbody>
            </table>
          </article>
        </div>
        <div className="w-[10px] pt-[198px] pl-px">
          <div className="h-[408px] w-1.5 rounded-full bg-[#8b8b8b]" />
        </div>
      </div>
      <div className="flex h-[9px] pl-[362px]">
        <div className="h-1.5 w-[403px] rounded-full bg-[#8b8b8b]" />
      </div>
    </main>
  );
}

function Sidebar() {
  const [layout, setLayout] = useState(0);
  return (
    <aside className="flex w-[502px] shrink-0">
      <div className="w-[452px]">
        <header className="flex h-[26px] items-center pr-1.5 pl-0.5">
          <svg viewBox="0 0 8 12" className="h-3 w-2">
            <path d="M1 1.5h6M1 5.5h6M1 9.5h6" stroke="#666" strokeWidth="2" strokeDasharray="2 2" />
          </svg>
          <h2 className="ml-1.5 flex-1 font-bold">Properties</h2>
          <button aria-label="Close sidebar"><Cross className="size-[10px]" /></button>
        </header>
        <SectionBar title="Slide" gear />
        <div className="flex flex-col gap-[3px] pt-1.5 pb-[7px]">
          <Field label="Format" value={"On-scre…\u00a0 w (4:3)"} />
          <Field label="Orientation" value="Landscape" />
          <Field label="Background" value="None" />
          <button className="ml-[191px] h-[34px] w-[158px] rounded-md border border-[#c4c4c4] bg-white pb-0.5">Insert Image...</button>
          <Field label="Master Slide" value="Blank Slide" />
          <div className="-mt-0.5 -mb-px">
            <Check label="Master Background" />
            <Check label="Master Objects" />
          </div>
          <button className="ml-[191px] h-[34px] w-[158px] rounded-md border border-[#c4c4c4] bg-white pb-0.5">Master View</button>
        </div>
        <SectionBar title="Layouts" />
        <div className="grid grid-cols-4">
          {layouts.map((blocks, i) => (
            <button
              key={i}
              aria-label={`Layout ${i + 1}`}
              onClick={() => setLayout(i)}
              className={`flex h-[66px] items-center justify-center border pr-px ${i === layout ? "border-[#e95420]" : "border-transparent"}`}
            >
              <svg viewBox="0 0 64 51" className="h-[51px] w-16">
                <rect x=".5" y=".5" width="63" height="50" rx="9" fill="#e6e6e6" stroke="#858585" />
                {blocks.map(([x, y, w, h, accent], j) => (
                  <rect key={j} x={x} y={y} width={w} height={h} rx="2.5" fill={accent ? "#8e5bd8" : "#808080"} />
                ))}
              </svg>
            </button>
          ))}
        </div>
      </div>
      <nav aria-label="Sidebar decks" className="flex w-[50px] flex-col items-start gap-2 pl-1">
        <button aria-label="Sidebar settings" className="flex h-[39px] w-9 items-center justify-center">
          <svg viewBox="0 0 10 11" className="h-[11px] w-[10px]">
            <path d="M0 1h10M0 5.5h10M0 10h10" stroke="#3d3d3d" />
          </svg>
        </button>
        {decks.map((d, i) => (
          <button
            key={d}
            aria-label={d}
            className={`flex h-[34px] w-9 items-center justify-center rounded-md border ${i === 0 ? "border-[#c4c4c4] bg-[#d5d5d5]" : "border-transparent"}`}
          >
            <svg viewBox="0 0 24 24" className="size-[22px] overflow-visible">{icons[d]}</svg>
          </button>
        ))}
      </nav>
    </aside>
  );
}

function StatusBar() {
  const [zoom, setZoom] = useState(50);
  return (
    <footer className="flex h-[21px] shrink-0 items-center border-t border-[#b5b5b5] pt-px text-[12px]">
      <span className="w-[76px] border-r border-[#d9d9d9] pl-[10px] leading-[14px] whitespace-nowrap">Slide 3 of 3</span>
      <span className="w-[503px] border-r border-[#d9d9d9] leading-[14px]">&nbsp;</span>
      <span className="w-[373px] border-r border-[#d9d9d9] pl-2 leading-[14px]">Blank Slide</span>
      <span className="flex w-[115px] items-center gap-1 pl-[11px] leading-[14px] whitespace-nowrap">
        <svg viewBox="0 0 15 12" className="h-3 w-[15px]">
          <rect x="4.5" y="3.5" width="10" height="7" fill="none" stroke={K} />
          <path d="M0 3.5h6M3 .5v6" stroke="#e95420" />
        </svg>
        -1.09 / -0.30
      </span>
      <span className="flex w-[101px] items-center gap-1 border-r border-[#d9d9d9] leading-[14px] whitespace-nowrap">
        <svg viewBox="0 0 16 12" className="h-3 w-4">
          <rect x="4.5" y="4.5" width="10" height="6" rx="1" fill="none" stroke={K} />
          <path d="M4 1.5h11M4.5 0v3M14.5 0v3M1.5 4v7M0 4.5h3M0 10.5h3" stroke="#e95420" />
        </svg>
        0.00 x 0.00
      </span>
      <span className="flex w-[22px] justify-center border-r border-[#d9d9d9]">
        <svg viewBox="0 0 10 14" className="h-3.5 w-2.5">
          <path d="M3.5 1.5h3v5h2L5 11 1.5 6.5h2z" fill="#94d13a" stroke="#4d6b2d" />
          <path d="M1 12.5h8" stroke={K} />
        </svg>
      </span>
      <span className="w-[29px] border-r border-[#d9d9d9] leading-[14px]">&nbsp;</span>
      <span className="flex-1 border-r border-[#d9d9d9] text-center leading-[14px]">English (Hong Kong)</span>
      <span className="flex w-[23px] justify-center border-r border-[#d9d9d9]">
        <svg viewBox="0 0 14 14" className="size-3.5">
          <path d="M7 1v12M1 7h12" stroke="#e95420" strokeWidth="1.4" />
          <path d="M7 0l2.5 3h-5zM7 14l2.5-3h-5zM0 7l3-2.5v5zM14 7l-3-2.5v5z" fill="#e95420" />
        </svg>
      </span>
      <span className="flex w-[141px] items-center border-r border-[#d9d9d9] pl-[9px]">
        <button aria-label="Zoom out" className="h-[2px] w-2 bg-[#4d4d4d]" />
        <input
          type="range"
          aria-label="Zoom"
          value={zoom}
          onChange={(e) => setZoom(Number(e.target.value))}
          className="mr-2 ml-1.5 h-[14px] w-24 appearance-none bg-[linear-gradient(#777,#777)] bg-[length:100%_1px] bg-center bg-no-repeat [&::-webkit-slider-thumb]:size-2 [&::-webkit-slider-thumb]:appearance-none [&::-webkit-slider-thumb]:rounded-full [&::-webkit-slider-thumb]:border [&::-webkit-slider-thumb]:border-[#555] [&::-webkit-slider-thumb]:bg-white"
        />
        <button aria-label="Zoom in" className="flex">
          <svg viewBox="0 0 8 8" className="size-2">
            <path d="M0 4h8M4 0v8" stroke={K} strokeWidth="2" />
          </svg>
        </button>
      </span>
      <span className="w-[49px] pl-2 leading-[14px]">107%</span>
    </footer>
  );
}

export default function App() {
  return (
    <div className="flex h-screen flex-col overflow-hidden bg-[#1e1118] font-['Noto_Sans','Open_Sans',sans-serif] text-[14px] text-[#3d3d3d]">
      <header className="grid h-[27px] shrink-0 grid-cols-[1fr_auto_1fr] items-center bg-[#131313] text-[#f2f2f2]">
        <div className="flex items-center pl-[18px]">
          <button>Activities</button>
          <span className="ml-[43px] flex items-center gap-[7px]">
            <svg viewBox="0 0 13 15" className="h-[15px] w-[13px]">
              <path d="M1 0h8l4 4v10a1 1 0 0 1-1 1H1a1 1 0 0 1-1-1V1a1 1 0 0 1 1-1z" fill="#dedede" />
              <path d="M2.5 6.5h8v6h-8zM4 8.5h1M6 8.5h3M4 10.5h1M6 10.5h3" fill="none" stroke="#222" />
            </svg>
            LibreOffice Impress
          </span>
        </div>
        <div className="flex items-center gap-[18px] pl-[103px]">
          <span>Apr 21&nbsp; 23:39</span>
          <svg viewBox="0 0 14 16" className="h-4 w-3.5" fill="none" stroke="#f2f2f2">
            <path d="M1.5 12.5c2-1 2-3 2-6a3.5 4.5 0 0 1 7 0c0 3 0 5 2 6zM5.5 14.5h3" />
          </svg>
        </div>
        <div className="flex items-center justify-end gap-3.5 pr-[18px]">
          <svg viewBox="0 0 16 14" className="h-3.5 w-4">
            <path d="M1 4.5h3L8 1v12L4 9.5H1z" fill="#f2f2f2" />
            <path d="M10 4.5q2 2.5 0 5M12 2.5q4 4.5 0 9" fill="none" stroke="#f2f2f2" />
          </svg>
          <svg viewBox="0 0 14 14" className="size-3.5" fill="none" stroke="#f2f2f2" strokeWidth="1.3">
            <path d="M7 .5v6M4 2a5.8 5.8 0 1 0 6 0" />
          </svg>
        </div>
      </header>

      <div className="flex min-h-0 flex-1">
        <nav aria-label="Dock" className="flex w-[70px] shrink-0 flex-col items-center bg-linear-to-br from-[#1a0e15] via-[#1e1118] to-[#2b1623] pt-1.5">
          <div className="flex flex-col gap-1">
            {dock.map((d) => (
              <button
                key={d.name}
                aria-label={d.name}
                className={`relative flex size-16 items-center justify-center rounded-xl ${d.active ? "bg-[#453a41]" : ""}`}
              >
                <svg viewBox="0 0 48 48" className="size-12 overflow-visible">{d.art}</svg>
                {d.active && <span className="absolute left-0 size-1.5 rounded-full bg-[#e95420]" />}
              </button>
            ))}
          </div>
          <hr className="mt-[3px] w-12 border-[#d9d4d7]" />
          <button aria-label="Trash" className="mt-[3px] flex size-16 items-center justify-center">
            <svg viewBox="0 0 48 48" className="size-12">
              <rect x="6.5" y="2.5" width="35" height="44" rx="4" fill="#cbcbcb" stroke="#e0e0e0" />
              <rect x="9" y="5" width="30" height="6" rx="2.5" fill="#777" />
              <g fill="none" stroke="#1f8a1a" strokeWidth="4">
                <path d="M19.5 27l3-5h4l2 3.5M31 28.5l2 4-2.5 4.5h-4.5M21.5 37.5H18l-2-4.5 2-3.5" />
              </g>
            </svg>
          </button>
          <button aria-label="Show Applications" className="mt-auto mb-[23px] grid grid-cols-3 gap-1.5">
            {Array.from({ length: 9 }, (_, i) => (
              <span key={i} className="size-1.5 rounded-xs bg-[#f2f2f2]" />
            ))}
          </button>
        </nav>

        <div className="flex min-w-0 flex-1 flex-col bg-[#fafafa]">
          <header className="grid h-[37px] shrink-0 grid-cols-[1fr_auto_1fr] items-center border-b border-[#bdbdbd] bg-[#ebebeb]">
            <span />
            <h1 className="font-bold">55_10.pptx - LibreOffice Impress</h1>
            <div className="flex justify-end gap-[13px] pr-2">
              <button aria-label="Minimize" className="flex size-[21px] items-center justify-center rounded-full bg-[#dcdcdc]">
                <svg viewBox="0 0 8 8" className="size-2"><path d="M0 7.5h8" stroke="#3d3d3d" /></svg>
              </button>
              <button aria-label="Restore" className="flex size-[21px] items-center justify-center rounded-full bg-[#dcdcdc]">
                <svg viewBox="0 0 9 9" className="size-[9px]"><path d="M.5 2.5h6v6h-6zM2 .5h6.5V7" fill="none" stroke="#3d3d3d" /></svg>
              </button>
              <button aria-label="Close" className="flex size-[21px] items-center justify-center rounded-full bg-[#dcdcdc]">
                <Cross className="size-[10px]" />
              </button>
            </div>
          </header>

          <div className="mr-6 flex h-[25px] shrink-0 items-center border-b border-[#d9d9d9] pl-2">
            <nav className="flex flex-1 gap-[17px]">
              {menus.map((m) => (
                <button key={m}>{m}</button>
              ))}
            </nav>
            <button aria-label="Close document" className="-mr-3"><Cross className="size-[10px]" /></button>
          </div>

          <ToolBar label="Standard" tools={standardBar} />
          <ToolBar label="Drawing" tools={drawingBar} />

          <div className="flex min-h-0 flex-1">
            <SlidesPanel />
            <div className="flex w-[9px] shrink-0 items-center bg-[linear-gradient(#b5b5b5,#b5b5b5)] bg-[length:1px_100%] bg-[position:1px_0] bg-no-repeat">
              <button aria-label="Collapse slides" className="-mt-[2px] flex h-[73px] w-[7px] items-center bg-[#999]">
                <svg viewBox="0 0 5 8" className="h-2 w-[5px]"><path d="M5 0v8L0 4z" fill="#fff" /></svg>
              </button>
            </div>
            <Editor />
            <div className="flex w-[9px] shrink-0 items-center border-l border-[#b5b5b5]">
              <button aria-label="Collapse sidebar" className="-mt-[2px] flex h-[73px] w-1.5 items-center bg-[#999]">
                <svg viewBox="0 0 5 8" className="h-2 w-[5px]"><path d="M0 0v8l5-4z" fill="#fff" /></svg>
              </button>
            </div>
            <Sidebar />
          </div>

          <StatusBar />
        </div>
      </div>
    </div>
  );
}
